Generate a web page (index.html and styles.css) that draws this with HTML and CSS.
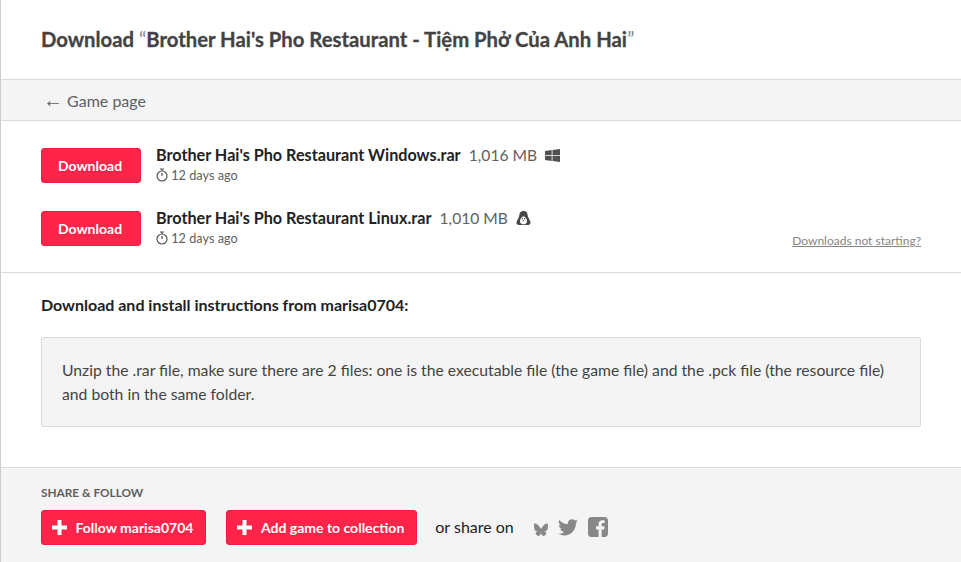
FILE: index.html
```html
<!DOCTYPE html>
<html lang="en">
<head>
  <meta charset="UTF-8">
  <meta name="viewport" content="width=device-width, initial-scale=1.0">
  <title>Download Brother Hai's Pho Restaurant</title>
  <link rel="stylesheet" href="styles.css">
</head>
<body>

  <div class="page">
    <div class="header">
      <h2>Download <span class="quote">“</span>Brother Hai's Pho Restaurant - Tiệm Phở Của Anh Hai<span class="quote">”</span></h2>
    </div>

    <div class="nav-bar">
      <a class="back-link" href="#"><span class="arrow">←</span> Game page</a>
    </div>

    <!-- Uploads -->
    <div class="uploads">
      <div class="upload-row">
        <a class="button download-btn" href="#">Download</a>
        <div class="upload-info">
          <div class="upload-name">
            <strong>Brother Hai's Pho Restaurant Windows.rar</strong>
            <span class="file-size">1,016 MB</span>
            <svg class="platform-icon" width="15" height="13" viewBox="0 0 15 13"><path fill="#505050" d="M0 2 6.700 1V6.200H0zM7.500.9 15 0V6.200H7.500zM0 7H6.700V12L0 11zM7.500 7H15V13L7.500 12.100z"/></svg>
          </div>
          <div class="upload-date">
            <svg class="clock" width="12" height="14" viewBox="0 0 12 14"><circle cx="6" cy="8" r="5" fill="none" stroke="#555" stroke-width="1.2"/><path d="M4 1h4M6 1v2M6 8V5" fill="none" stroke="#555" stroke-width="1.2"/></svg>
            12 days ago
          </div>
        </div>
      </div>

      <div class="upload-row">
        <a class="button download-btn" href="#">Download</a>
        <div class="upload-info">
          <div class="upload-name">
            <strong>Brother Hai's Pho Restaurant Linux.rar</strong>
            <span class="file-size">1,010 MB</span>
            <svg class="platform-icon" width="15" height="14" viewBox="0 0 15 14"><path fill="#484848" d="M7.500 0C4 0 3.500 2.500 3.300 4.500 3 7 .8 9 .3 12L2 14H13L14.700 12C14.200 9 12 7 11.700 4.500 11.500 2.500 11 0 7.500 0z"/><path fill="#fff" d="M7.500 5.500C5.500 5.500 4 8.300 4 10.400 4 12.300 5.800 13.200 7.500 13.200S11 12.300 11 10.400C11 8.300 9.500 5.500 7.500 5.500z"/><path fill="#484848" d="M5.700 7h1.200v1.200H5.700zM8.100 7h1.200v1.200H8.100zM6.300 9h2.400L7.500 10.300z"/></svg>
          </div>
          <div class="upload-date">
            <svg class="clock" width="12" height="14" viewBox="0 0 12 14"><circle cx="6" cy="8" r="5" fill="none" stroke="#555" stroke-width="1.2"/><path d="M4 1h4M6 1v2M6 8V5" fill="none" stroke="#555" stroke-width="1.2"/></svg>
            12 days ago
          </div>
        </div>
        <a class="help-link" href="#">Downloads not starting?</a>
      </div>
    </div>

    <!-- Instructions -->
    <div class="instructions">
      <h3>Download and install instructions from marisa0704:</h3>
      <div class="instructions-box">
        Unzip the .rar file, make sure there are 2 files: one is the executable file (the game file) and the .pck file (the resource file) and both in the same folder.
      </div>
    </div>

    <!-- Share -->
    <div class="share">
      <div class="share-title">SHARE &amp; FOLLOW</div>
      <div class="share-row">
        <a class="button share-btn" href="#"><svg width="15" height="15" viewBox="0 0 15 15"><path fill="#fff" d="M5.500 0h4v5.500H15v4H9.500V15h-4V9.500H0v-4h5.500z"/></svg>Follow marisa0704</a>
        <a class="button share-btn" href="#"><svg width="15" height="15" viewBox="0 0 15 15"><path fill="#fff" d="M5.500 0h4v5.500H15v4H9.500V15h-4V9.500H0v-4h5.500z"/></svg>Add game to collection</a>
        <span class="share-label">or share on</span>
        <div class="share-icons">
          <svg class="bluesky" width="14" height="13" viewBox="0 0 16 14"><path fill="#888" d="M3.500 1C5.300 2.300 7.200 5 8 6.500 8.800 5 10.700 2.300 12.500 1 13.800 0 16 -.7 16 1.800c0 .5-.3 4.200-.5 4.800-.6 2.100-2.700 2.600-4.600 2.300 3.300.6 4.100 2.400 2.300 4.200-3.400 3.500-4.900-.9-5.200-2-.3 1.100-1.800 5.500-5.200 2-1.800-1.800-1-3.600 2.300-4.200-1.900.3-4-.2-4.600-2.300C.3 6 0 2.300 0 1.800 0-.7 2.200 0 3.500 1z"/></svg>
          <svg width="20" height="17" viewBox="0 0 24 20"><path fill="#888" d="M24 2.400c-.9.400-1.800.7-2.800.8 1-.6 1.800-1.600 2.200-2.700-1 .6-2 1-3.100 1.200C19.300.7 18 0 16.600 0c-2.700 0-4.900 2.200-4.900 4.900 0 .4 0 .8.100 1.100C7.700 5.800 4.100 3.800 1.700.9 1.200 1.600 1 2.500 1 3.400c0 1.700.9 3.200 2.200 4.100-.8 0-1.600-.2-2.200-.6v.1c0 2.400 1.700 4.400 3.900 4.800-.4.100-.8.200-1.300.2-.3 0-.6 0-.9-.1.600 2 2.400 3.400 4.600 3.400-1.700 1.300-3.800 2.100-6.100 2.100-.4 0-.8 0-1.200-.1C2.200 18.700 4.800 19.500 7.500 19.500c9.100 0 14-7.500 14-14v-.6c1-.7 1.800-1.600 2.500-2.500z"/></svg>
          <svg width="20" height="20" viewBox="0 0 21 21"><path fill="#888" d="M3.500 0h14C19.400 0 21 1.600 21 3.500v14c0 1.900-1.600 3.500-3.500 3.500H14.300V13h2.700l.4-3.200h-3.100V7.900c0-.9.300-1.500 1.600-1.500h1.600V3.500c-.3 0-1.300-.1-2.400-.1-2.400 0-4 1.400-4 4.100v2.300H8.400V13h2.700v8H3.500C1.600 21 0 19.400 0 17.500v-14C0 1.600 1.600 0 3.500 0z"/></svg>
        </div>
      </div>
    </div>
  </div>

</body>
</html>
```

FILE: styles.css
```css
body {
  font-family: Lato, "Noto Sans", sans-serif;
  margin: 0;
  padding: 0;
  background-color: #fff;
  color: #222;
  font-size: 16px;
}
a {
  text-decoration: none;
}
.page {
  border-left: 1px solid #ccc;
  height: 562px;
  overflow: hidden;
}
.header {
  height: 79px;
  padding: 0 40px;
  display: flex;
  align-items: center;
  border-bottom: 1px solid #dadada;
}
h2 {
  margin: 0 0 2px;
  font-size: 20.3px;
  font-weight: 700;
  color: #434343;
  -webkit-text-stroke: 0.3px #434343;
}
.quote {
  font-weight: 400;
  color: #858585;
  -webkit-text-stroke: 0;
}
.nav-bar {
  height: 40px;
  padding: 0 42px;
  display: flex;
  align-items: center;
  background-color: #f4f4f4;
  border-bottom: 1px solid #dadada;
}
.back-link {
  color: #606060;
  font-size: 16px;
}
.arrow {
  font-family: "Liberation Sans", sans-serif;
  font-size: 20px;
  line-height: 1;
}
.uploads {
  box-sizing: border-box;
  padding: 27px 40px 0;
  height: 152px;
  border-bottom: 1px solid #dadada;
}
.upload-row {
  display: flex;
  align-items: center;
  height: 35px;
  margin-bottom: 28px;
  position: relative;
}
.button {
  display: flex;
  align-items: center;
  justify-content: center;
  box-sizing: border-box;
  height: 35px;
  background-color: #ff2449;
  color: #fff;
  font-size: 14px;
  font-weight: 700;
  border: 1px solid #e81f40;
  border-radius: 3px;
  text-shadow: 0 1px 0 rgba(0, 0, 0, 0.1);
}
.download-btn {
  width: 100px;
  margin-right: 15px;
  padding-right: 2px;
}
.upload-info {
  line-height: 20px;
  margin-bottom: 3px;
}
.upload-name strong {
  font-size: 16.2px;
  color: #222;
}
.file-size {
  color: #606060;
  font-size: 15.6px;
  margin-left: 4px;
}
.platform-icon {
  margin-left: 4px;
  vertical-align: -1px;
}
.upload-date {
  color: #606060;
  font-size: 12.7px;
  line-height: 18px;
  margin-top: 1px;
}
.clock {
  vertical-align: -2px;
}
.help-link {
  position: absolute;
  right: 0;
  bottom: -2px;
  color: #858585;
  font-size: 12px;
  text-decoration: underline;
}
.instructions {
  padding: 0 40px;
  height: 194px;
  box-sizing: border-box;
}
h3 {
  margin: 0;
  padding-top: 22px;
  font-size: 16px;
  line-height: 19px;
  font-weight: 700;
  color: #222;
}
.instructions-box {
  margin-top: 23px;
  height: 90px;
  box-sizing: border-box;
  padding: 20px;
  font-size: 15.73px;
  line-height: 24px;
  background-color: #f4f4f4;
  border: 1px solid #dadada;
  border-radius: 2px;
  color: #434343;
}
.share {
  height: 95px;
  padding: 17px 40px 0;
  box-sizing: border-box;
  background-color: #f4f4f4;
  border-top: 1px solid #dadada;
}
.share-title {
  font-size: 11.8px;
  font-weight: 700;
  color: #606060;
  line-height: 15px;
}
.share-row {
  display: flex;
  align-items: center;
  margin-top: 10px;
}
.share-btn {
  gap: 9px;
  padding: 0 12px 0 9.5px;
  margin-right: 20px;
}
.share-label {
  color: #222;
  font-size: 16px;
  margin: 0 20px 3px -2px;
}
.share-icons {
  display: flex;
  align-items: center;
  gap: 10px;
  margin-bottom: 1px;
}
.bluesky {
  margin-top: 5px;
}
```
